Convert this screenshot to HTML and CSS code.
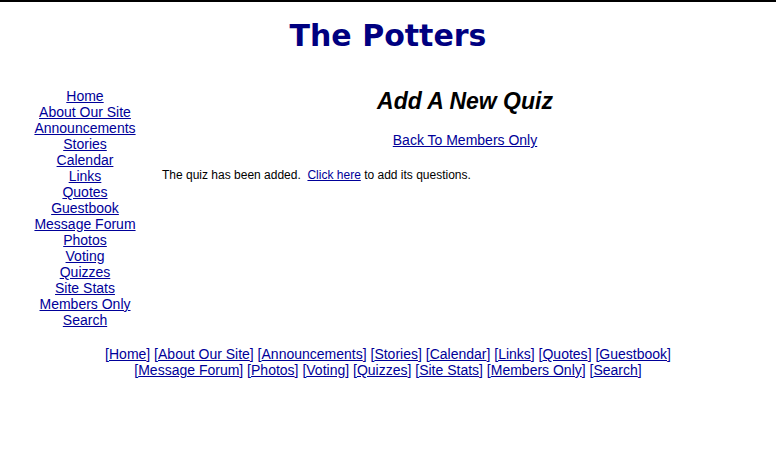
FILE: index.html
```html
<!DOCTYPE html>
<html>
<head>
<meta charset="utf-8">
<title>The Potters - Add A New Quiz</title>
<link rel="stylesheet" href="styles.css">
</head>
<body>
<div class="page">
  <h1 class="site-title">The Potters</h1>
  <div class="layout">
    <nav class="sidenav">
      <a href="#">Home</a>
      <a href="#">About Our Site</a>
      <a href="#">Announcements</a>
      <a href="#">Stories</a>
      <a href="#">Calendar</a>
      <a href="#">Links</a>
      <a href="#">Quotes</a>
      <a href="#">Guestbook</a>
      <a href="#">Message Forum</a>
      <a href="#">Photos</a>
      <a href="#">Voting</a>
      <a href="#">Quizzes</a>
      <a href="#">Site Stats</a>
      <a href="#">Members Only</a>
      <a href="#">Search</a>
    </nav>
    <main class="content">
      <h2 class="page-title">Add A New Quiz</h2>
      <p class="back"><a href="#">Back To Members Only</a></p>
      <p class="message">The quiz has been added.&nbsp; <a href="#">Click here</a> to add its questions.</p>
    </main>
  </div>
  <footer class="footer">
    <div class="footer-row">[<a href="#">Home</a>] [<a href="#">About Our Site</a>] [<a href="#">Announcements</a>] [<a href="#">Stories</a>] [<a href="#">Calendar</a>] [<a href="#">Links</a>] [<a href="#">Quotes</a>] [<a href="#">Guestbook</a>]</div>
    <div class="footer-row">[<a href="#">Message Forum</a>] [<a href="#">Photos</a>] [<a href="#">Voting</a>] [<a href="#">Quizzes</a>] [<a href="#">Site Stats</a>] [<a href="#">Members Only</a>] [<a href="#">Search</a>]</div>
  </footer>
</div>
</body>
</html>
```

FILE: styles.css
```css
html, body {
  margin: 0;
  padding: 0;
  background: #ffffff;
}

body {
  border-top: 2px solid #000000;
  font-family: "Liberation Sans", Arial, sans-serif;
  color: #000000;
}

a {
  color: #000099;
  text-decoration: underline;
}

.page {
  padding: 0 8px;
}

.site-title {
  margin: 16px 0 0;
  text-align: center;
  font-family: "DejaVu Sans", Verdana, sans-serif;
  font-weight: bold;
  font-size: 30px;
  line-height: 35px;
  color: #000080;
}

.layout {
  display: grid;
  grid-template-columns: 154px 1fr;
  margin-top: 35px;
}

.sidenav {
  display: flex;
  flex-direction: column;
  align-items: center;
  font-size: 14px;
  line-height: 16px;
}

.content {
  text-align: center;
}

.page-title {
  margin: 0;
  font-size: 23px;
  line-height: 26px;
  font-weight: bold;
  font-style: italic;
  color: #000000;
}

.back {
  margin: 18px 0 0;
  font-size: 14px;
  line-height: 16px;
}

.message {
  margin: 20px 0 0;
  text-align: left;
  font-size: 12px;
  line-height: 14px;
}

.footer {
  margin-top: 18px;
  text-align: center;
  font-size: 14px;
  line-height: 16px;
  color: #000099;
}
```
